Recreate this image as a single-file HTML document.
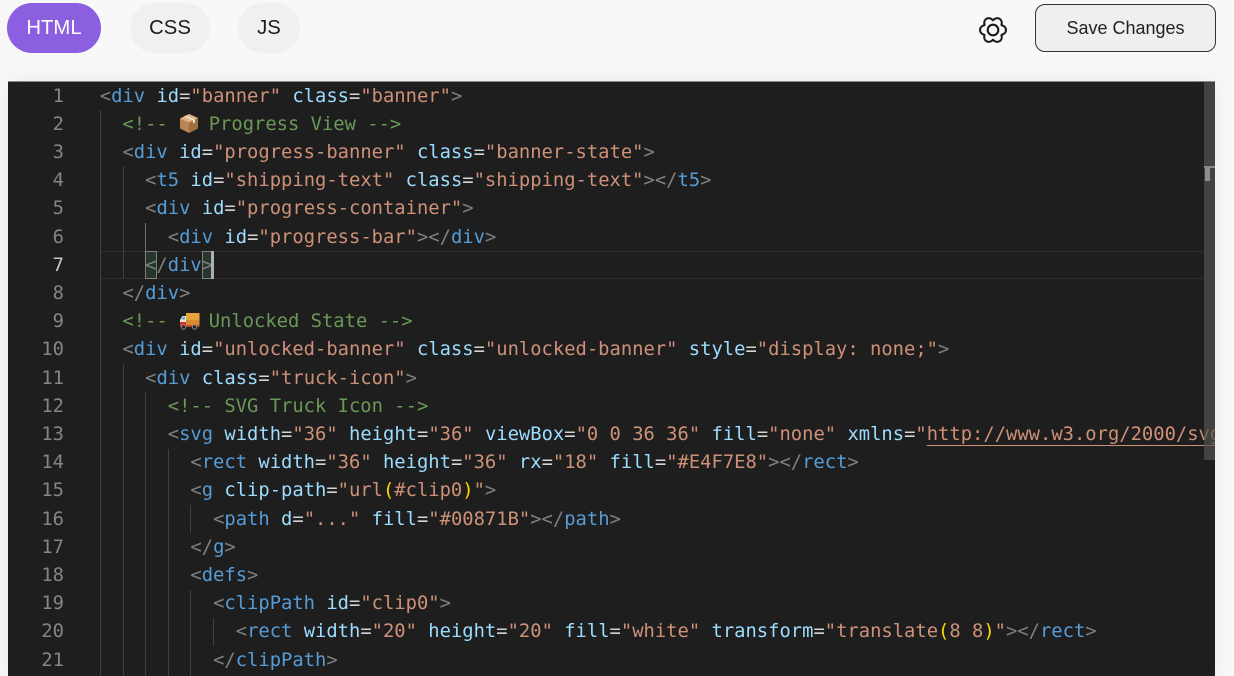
<!DOCTYPE html>
<html><head><meta charset="utf-8">
<style>
html,body{margin:0;padding:0;width:1234px;height:676px;overflow:hidden;background:#f8f8f8;font-family:"Liberation Sans",sans-serif}
.tab{position:absolute;top:3px;height:50px;border-radius:25px;background:#f0f0f0;color:#1c1c1c;font-size:20.3px;line-height:50px;text-align:center}
#save{position:absolute;left:1035px;top:4px;width:179px;height:46px;border:1px solid #333;border-radius:10px;background:#efefef;color:#222;font-size:18px;line-height:47px;text-align:center}
#panel{position:absolute;left:8px;top:81px;width:1207px;height:595px;background:#1e1e1e;box-shadow:0 0 22px rgba(0,0,0,.06);overflow:hidden}
#topline{position:absolute;left:0;top:0;width:100%;height:1px;background:#8a8a8a;z-index:6}
#txt{position:absolute;left:0;top:1.5px;width:100%;height:100%}
.n{position:absolute;left:0;width:56px;text-align:right;color:#858585;font:18.82px/28.2px "DejaVu Sans Mono",monospace}
.l{position:absolute;left:91.8px;white-space:pre;font:18.82px/28.2px "DejaVu Sans Mono",monospace;color:#d4d4d4;z-index:3}
.t{color:#569cd6}.b{color:#808080}.a{color:#9cdcfe}.s{color:#ce9178}.c{color:#6a9955}.y{color:#ffd700}
.e{display:inline-block;width:18.3px;height:1px;position:relative}
.e svg{position:absolute;left:0;top:-17px}
.g{position:absolute;width:1px;background:#404040;z-index:1}
</style></head><body>
<div class="tab" style="left:7px;width:94px;background:#8b5fdf;color:#fff">HTML</div>
<div class="tab" style="left:130px;width:80px">CSS</div>
<div class="tab" style="left:238px;width:62px">JS</div>
<svg style="position:absolute;left:977px;top:14px" width="32" height="32" viewBox="-16 -16 32 32" fill="none" stroke="#1a1a1a" stroke-width="2.1" stroke-linejoin="round"><path d="M8.49,-4.9C14.5,-3.4 14.5,3.4 8.49,4.9C10.19,10.86 4.31,14.26 0,9.8C-4.31,14.26 -10.19,10.86 -8.49,4.9C-14.5,3.4 -14.5,-3.4 -8.49,-4.9C-10.19,-10.86 -4.31,-14.26 0,-9.8C4.31,-14.26 10.19,-10.86 8.49,-4.9Z"/><circle cx="0" cy="0" r="5.3"/></svg>
<div id="save">Save Changes</div>
<div id="panel">
<div id="topline"></div>
<!-- active line -->
<div style="position:absolute;left:93px;top:170px;width:1103px;height:26px;border-top:1px solid #2e2e2e;border-bottom:1px solid #2e2e2e;z-index:0"></div>
<div style="position:absolute;left:137px;top:170px;width:10px;height:26px;border:1px solid #808080;background:#26362a;z-index:2"></div>
<div style="position:absolute;left:193.5px;top:170px;width:10px;height:26px;border:1px solid #808080;background:#26362a;z-index:2"></div>
<div style="position:absolute;left:203px;top:170px;width:2.5px;height:28px;background:#aeafad;z-index:4"></div>
<!-- indent guides -->
<div class="g" style="left:92px;top:29px;height:566px"></div>
<div class="g" style="left:115px;top:85px;height:113px"></div>
<div class="g" style="left:137px;top:142px;height:28px;background:#707070"></div>
<div class="g" style="left:115px;top:283px;height:312px"></div>
<div class="g" style="left:137px;top:311px;height:284px"></div>
<div class="g" style="left:160px;top:368px;height:227px"></div>
<div class="g" style="left:182px;top:424px;height:28px"></div>
<div class="g" style="left:182px;top:509px;height:86px"></div>
<div class="g" style="left:205px;top:537px;height:28px"></div>
<div id="txt">
<div class="n" style="top:0">1</div><div class="n" style="top:28.2px">2</div><div class="n" style="top:56.4px">3</div><div class="n" style="top:84.6px">4</div><div class="n" style="top:112.8px">5</div><div class="n" style="top:141px">6</div><div class="n" style="top:169.2px;color:#c6c6c6">7</div><div class="n" style="top:197.4px">8</div><div class="n" style="top:225.6px">9</div><div class="n" style="top:253.8px">10</div><div class="n" style="top:282px">11</div><div class="n" style="top:310.2px">12</div><div class="n" style="top:338.4px">13</div><div class="n" style="top:366.6px">14</div><div class="n" style="top:394.8px">15</div><div class="n" style="top:423px">16</div><div class="n" style="top:451.2px">17</div><div class="n" style="top:479.4px">18</div><div class="n" style="top:507.6px">19</div><div class="n" style="top:535.8px">20</div><div class="n" style="top:564px">21</div>

<div class="l" style="top:0"><span class="b">&lt;</span><span class="t">div</span> <span class="a">id</span>=<span class="s">"banner"</span> <span class="a">class</span>=<span class="s">"banner"</span><span class="b">&gt;</span></div>
<div class="l" style="top:28.2px">  <span class="c">&lt;!-- <span class="e"><svg width="20" height="22" viewBox="0 0 20 22"><path d="M1 6.5L10 2l9 4v10.5L10 21l-9-4.5z" fill="#b98555"/><path d="M10 10.5V21l9-4.5V6z" fill="#a06f42"/><path d="M1 6.5L10 2l9 4-9 4.5z" fill="#dcb283"/><path d="M5 4.5l9 4v3l2-1v-3l-9-4z" fill="#efe4d4"/></svg></span> Progress View --&gt;</span></div>
<div class="l" style="top:56.4px">  <span class="b">&lt;</span><span class="t">div</span> <span class="a">id</span>=<span class="s">"progress-banner"</span> <span class="a">class</span>=<span class="s">"banner-state"</span><span class="b">&gt;</span></div>
<div class="l" style="top:84.6px">    <span class="b">&lt;</span><span class="t">t5</span> <span class="a">id</span>=<span class="s">"shipping-text"</span> <span class="a">class</span>=<span class="s">"shipping-text"</span><span class="b">&gt;&lt;/</span><span class="t">t5</span><span class="b">&gt;</span></div>
<div class="l" style="top:112.8px">    <span class="b">&lt;</span><span class="t">div</span> <span class="a">id</span>=<span class="s">"progress-container"</span><span class="b">&gt;</span></div>
<div class="l" style="top:141px">      <span class="b">&lt;</span><span class="t">div</span> <span class="a">id</span>=<span class="s">"progress-bar"</span><span class="b">&gt;&lt;/</span><span class="t">div</span><span class="b">&gt;</span></div>
<div class="l" style="top:169.2px">    <span class="b">&lt;/</span><span class="t">div</span><span class="b">&gt;</span></div>
<div class="l" style="top:197.4px">  <span class="b">&lt;/</span><span class="t">div</span><span class="b">&gt;</span></div>
<div class="l" style="top:225.6px">  <span class="c">&lt;!-- <span class="e"><svg width="21" height="22" viewBox="0 0 21 22"><rect x="7" y="4" width="13.5" height="12" fill="#e9a33b"/><rect x="7" y="11" width="13.5" height="5" fill="#d98a2e"/><path d="M1 16V11l2.5-4H7v9z" fill="#e8e4e0"/><path d="M1 13h6v5H1z" fill="#d8322e"/><path d="M2.5 10.5L4 8h2v2.5z" fill="#5aa5d0"/><rect x="7" y="16" width="13.5" height="2" fill="#c44a30"/><circle cx="4.5" cy="18" r="2.2" fill="#222" stroke="#999" stroke-width=".8"/><circle cx="15.5" cy="18" r="2.2" fill="#222" stroke="#999" stroke-width=".8"/></svg></span> Unlocked State --&gt;</span></div>
<div class="l" style="top:253.8px">  <span class="b">&lt;</span><span class="t">div</span> <span class="a">id</span>=<span class="s">"unlocked-banner"</span> <span class="a">class</span>=<span class="s">"unlocked-banner"</span> <span class="a">style</span>=<span class="s">"display: none;"</span><span class="b">&gt;</span></div>
<div class="l" style="top:282px">    <span class="b">&lt;</span><span class="t">div</span> <span class="a">class</span>=<span class="s">"truck-icon"</span><span class="b">&gt;</span></div>
<div class="l" style="top:310.2px">      <span class="c">&lt;!-- SVG Truck Icon --&gt;</span></div>
<div class="l" style="top:338.4px">      <span class="b">&lt;</span><span class="t">svg</span> <span class="a">width</span>=<span class="s">"36"</span> <span class="a">height</span>=<span class="s">"36"</span> <span class="a">viewBox</span>=<span class="s">"0 0 36 36"</span> <span class="a">fill</span>=<span class="s">"none"</span> <span class="a">xmlns</span>=<span class="s">"<span style="text-decoration:underline;text-underline-offset:5px">http://www.w3.org/2000/svg</span>"</span><span class="b">&gt;</span></div>
<div class="l" style="top:366.6px">        <span class="b">&lt;</span><span class="t">rect</span> <span class="a">width</span>=<span class="s">"36"</span> <span class="a">height</span>=<span class="s">"36"</span> <span class="a">rx</span>=<span class="s">"18"</span> <span class="a">fill</span>=<span class="s">"#E4F7E8"</span><span class="b">&gt;&lt;/</span><span class="t">rect</span><span class="b">&gt;</span></div>
<div class="l" style="top:394.8px">        <span class="b">&lt;</span><span class="t">g</span> <span class="a">clip-path</span>=<span class="s">"url<span class="y">(</span>#clip0<span class="y">)</span>"</span><span class="b">&gt;</span></div>
<div class="l" style="top:423px">          <span class="b">&lt;</span><span class="t">path</span> <span class="a">d</span>=<span class="s">"..."</span> <span class="a">fill</span>=<span class="s">"#00871B"</span><span class="b">&gt;&lt;/</span><span class="t">path</span><span class="b">&gt;</span></div>
<div class="l" style="top:451.2px">        <span class="b">&lt;/</span><span class="t">g</span><span class="b">&gt;</span></div>
<div class="l" style="top:479.4px">        <span class="b">&lt;</span><span class="t">defs</span><span class="b">&gt;</span></div>
<div class="l" style="top:507.6px">          <span class="b">&lt;</span><span class="t">clipPath</span> <span class="a">id</span>=<span class="s">"clip0"</span><span class="b">&gt;</span></div>
<div class="l" style="top:535.8px">            <span class="b">&lt;</span><span class="t">rect</span> <span class="a">width</span>=<span class="s">"20"</span> <span class="a">height</span>=<span class="s">"20"</span> <span class="a">fill</span>=<span class="s">"white"</span> <span class="a">transform</span>=<span class="s">"translate<span class="y">(</span>8 8<span class="y">)</span>"</span><span class="b">&gt;&lt;/</span><span class="t">rect</span><span class="b">&gt;</span></div>
<div class="l" style="top:564px">          <span class="b">&lt;/</span><span class="t">clipPath</span><span class="b">&gt;</span></div>
</div>
<!-- scrollbar -->
<div style="position:absolute;left:1196px;top:0;width:11px;height:595px;background:#1e1e1e;opacity:.5;z-index:4"></div>
<div style="position:absolute;left:1196px;top:0;width:11px;height:379px;background:rgba(121,121,121,.4);z-index:5"></div>
<div style="position:absolute;left:1196px;top:85px;width:11px;height:2px;background:#8a8a8a;z-index:6"></div>
<div style="position:absolute;left:1197px;top:87px;width:5px;height:13px;background:#8f8f8f;z-index:6"></div>
</div>
</body></html>
